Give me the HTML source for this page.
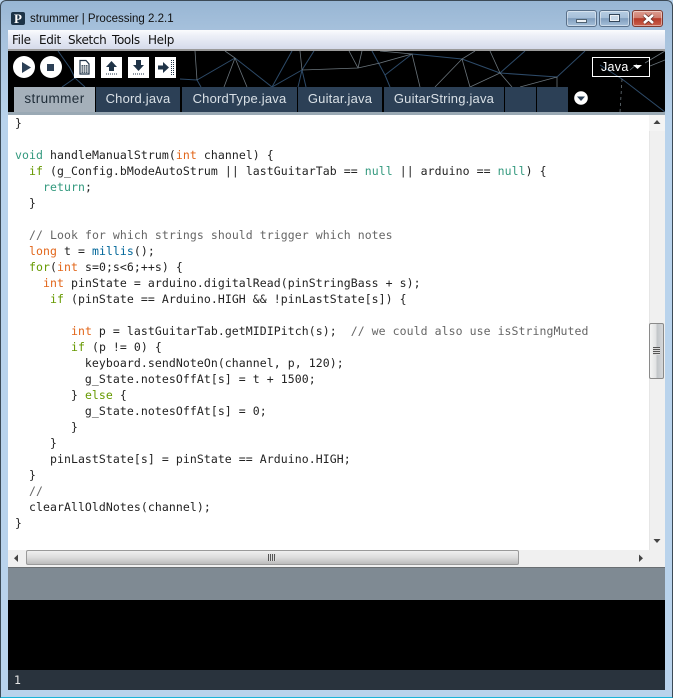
<!DOCTYPE html>
<html><head><meta charset="utf-8"><style>
html,body{margin:0;padding:0;width:673px;height:698px;overflow:hidden;background:#b9d3ec}
*{box-sizing:border-box}
.a{position:absolute}
#frame{position:absolute;left:0;top:0;width:673px;height:698px;background:linear-gradient(to bottom,#98b6d4 0,#a6c1dc 30px,#b9d3ec 120px,#b9d3ec 100%);border:1px solid #3c4a56;border-bottom:1px solid #1ab3d8;border-radius:6px 6px 0 0}
.m{position:absolute;top:32px;font:12px/16px "DejaVu Sans",sans-serif;color:#111;letter-spacing:-.35px}
.tab{position:absolute;top:87px;height:25px;background:#2c4056;color:#d9e0e6;font:13px/24px "Liberation Sans",sans-serif;text-align:center;letter-spacing:.2px}
#code{position:absolute;left:15px;top:115px;margin:0;font:11.5px/16px "DejaVu Sans Mono",monospace;letter-spacing:.07px;color:#222;white-space:pre}
#code .c{color:#666}#code .o{color:#e2661a}#code .t{color:#33997e}#code .g{color:#669900}#code .b{color:#006699}
.btn{position:absolute;top:57px;width:21px;height:21px;background:#fff}
.wb{position:absolute;top:10px;height:17px;border:1px solid #59708a;border-radius:3px;background:linear-gradient(to bottom,#b6cde3 0,#a6bfd9 45%,#7f9dbd 50%,#a6c0da 100%);box-shadow:inset 0 0 0 1px rgba(255,255,255,.45)}
</style></head><body>
<div id="frame"></div>

<div class="a" style="left:11px;top:12px;width:14px;height:13px;background:#1c3347;border-radius:2px;color:#fff;font:bold 13px/13px 'Liberation Serif',serif;text-align:center">P</div>
<div class="a" style="left:30px;top:11px;font:11.5px/16px 'Liberation Sans',sans-serif;color:#111">strummer | Processing 2.2.1</div>

<div class="wb" style="left:566px;width:31px"><div class="a" style="left:9px;top:8px;width:11px;height:4px;background:#eef2f6;border:1px solid #4f6272"></div></div>
<div class="wb" style="left:599px;width:31px"><div class="a" style="left:9px;top:3px;width:11px;height:8px;border:1px solid #33465a;background:#c8d8e8;box-shadow:inset 0 0 0 1px #eef2f6"></div></div>
<div class="wb" style="left:632px;width:31px;border-color:#7e3a30;background:linear-gradient(to bottom,#dd9d90 0,#cf7e70 45%,#b53a28 50%,#c9604c 100%)"><svg class="a" style="left:9px;top:2px" width="13" height="12" viewBox="0 0 13 12"><path d="M2 2L11 10M11 2L2 10" stroke="#5c2b25" stroke-width="4"/><path d="M2 2L11 10M11 2L2 10" stroke="#fff" stroke-width="2.6"/></svg></div>

<div class="a" style="left:8px;top:30px;width:657px;height:20px;background:linear-gradient(to bottom,#fbfcfe 0,#eef1f8 25%,#d3d9ea 100%)"></div>
<div class="a" style="left:8px;top:49px;width:657px;height:2px;background:#9a9a9a"></div>
<div class="m" style="left:12px">File</div><div class="m" style="left:39px">Edit</div><div class="m" style="left:68px">Sketch</div><div class="m" style="left:112px">Tools</div><div class="m" style="left:148px">Help</div>

<div class="a" style="left:8px;top:51px;width:657px;height:61px;background:#000"></div>
<svg class="a" style="left:8px;top:51px" width="657" height="61" viewBox="8 51 657 61" fill="none" stroke-width="1">
<g stroke="#2d4a68">
<path d="M58 51L70 68L75 78L62 87M75 78L85 87M235 58L197 80L180 79M197 80L201 87M235 58L272 87L302 70M272 87L292 51M302 70L314 51M302 70L298 87M302 70L306 87M412 54L385 75M385 75L390 87M385 75L372 51M412 54L462 59M500 73L525 51M500 73L557 77L585 51M622 79L665 112M622 79L600 65M462 59L500 73"/>
</g>
<g stroke="#7c8890" stroke-width=".8" opacity=".85">
<path d="M195 51L197 80M235 58L224 87M235 58L247 87M225 51L235 58M302 70L300 51M302 70L358 68L349 51M358 68L362 51M358 68L380 63L412 54L420 87M412 54L380 51M462 59L435 87M462 59L475 51M462 59L470 87M500 73L490 51M500 73L470 87M500 73L512 87M557 77L520 87M557 77L557 87M645 63L665 51M650 66L665 60M630 70L637 64"/>
<path d="M622 79L620 112" stroke-dasharray="3 3"/>
</g>
</svg>

<svg class="a" style="left:13px;top:56px" width="50" height="23" viewBox="0 0 50 23"><circle cx="11" cy="11" r="11" fill="#fff"/><path d="M9 6L18 11.5L9 17Z" fill="#2c4056"/><circle cx="38" cy="11" r="11" fill="#fff"/><rect x="34" y="8" width="7" height="7" fill="#2c4056"/></svg>

<div class="btn" style="left:74px"><svg width="21" height="21" viewBox="0 0 21 21"><path d="M6 3.5H12L15 7V17H6Z" fill="#fff" stroke="#1f3347" stroke-width="1.2"/><path d="M7.5 8h6v8h-6z" fill="#4a5a68"/><path d="M7.5 10h6M7.5 12h6M7.5 14h6M9.5 8v8M11.5 8v8" stroke="#fff" stroke-width=".6"/></svg></div>
<div class="btn" style="left:101px"><svg width="21" height="21" viewBox="0 0 21 21"><path d="M10.5 4L16 10H13V14H8V10H5Z" fill="#1f3347"/><path d="M5 17H16" stroke="#1f3347" stroke-width="1" stroke-dasharray="1 1"/></svg></div>
<div class="btn" style="left:128px"><svg width="21" height="21" viewBox="0 0 21 21"><path d="M8 3H13V8H16L10.5 14L5 8H8Z" fill="#1f3347"/><path d="M5 17H16" stroke="#1f3347" stroke-width="1" stroke-dasharray="1 1"/></svg></div>
<div class="btn" style="left:155px"><svg width="21" height="21" viewBox="0 0 21 21"><path d="M3 8.5H8V5L14 10.5L8 16V12.5H3Z" fill="#1f3347"/><path d="M16.5 3V18M18.5 3V18" stroke="#1f3347" stroke-width="1" stroke-dasharray="1 1"/></svg></div>

<div class="a" style="left:592px;top:57px;width:58px;height:20px;border:1px solid #fff;color:#fff;font:12.5px/18px 'Liberation Sans',sans-serif;padding-left:8px;letter-spacing:.3px">Java</div>
<svg class="a" style="left:632px;top:64px" width="11" height="6"><path d="M1 1H10L5.5 5Z" fill="#fff"/></svg>

<div class="tab" style="left:14px;width:81px;background:#a5b0ba;color:#1f2c38;font-size:13.5px;letter-spacing:.4px">strummer</div>
<div class="tab" style="left:96px;width:84px">Chord.java</div>
<div class="tab" style="left:182px;width:115px">ChordType.java</div>
<div class="tab" style="left:298px;width:84px">Guitar.java</div>
<div class="tab" style="left:384px;width:120px">GuitarString.java</div>
<div class="tab" style="left:505px;width:31px"></div>
<div class="tab" style="left:537px;width:31px"></div>
<svg class="a" style="left:574px;top:91px" width="14" height="14"><circle cx="7" cy="7" r="6.8" fill="#fff"/><path d="M3 5.5H11L7 10Z" fill="#2c4056"/></svg>

<div class="a" style="left:8px;top:112px;width:657px;height:3px;background:#9aa9b4"></div>

<div class="a" style="left:8px;top:115px;width:641px;height:435px;background:#fff"></div>
<pre id="code">}

<span class="t">void</span> handleManualStrum(<span class="o">int</span> channel) {
  <span class="g">if</span> (g_Config.bModeAutoStrum || lastGuitarTab == <span class="t">null</span> || arduino == <span class="t">null</span>) {
    <span class="t">return</span>;
  }

  <span class="c">// Look for which strings should trigger which notes</span>
  <span class="o">long</span> t = <span class="b">millis</span>();
  <span class="g">for</span>(<span class="o">int</span> s=0;s&lt;6;++s) {
    <span class="o">int</span> pinState = arduino.digitalRead(pinStringBass + s);
     <span class="g">if</span> (pinState == Arduino.HIGH &amp;&amp; !pinLastState[s]) {

        <span class="o">int</span> p = lastGuitarTab.getMIDIPitch(s);  <span class="c">// we could also use isStringMuted</span>
        <span class="g">if</span> (p != 0) {
          keyboard.sendNoteOn(channel, p, 120);
          g_State.notesOffAt[s] = t + 1500;
        } <span class="g">else</span> {
          g_State.notesOffAt[s] = 0;
        }
     }
     pinLastState[s] = pinState == Arduino.HIGH;
  }
  <span class="c">//</span>
  clearAllOldNotes(channel);
}</pre>

<div class="a" style="left:649px;top:115px;width:16px;height:435px;background:#f0f0f0;border-left:1px solid #e6e6e6"></div>
<div class="a" style="left:649px;top:115px;width:16px;height:16px;background:#f4f4f4"></div>
<svg class="a" style="left:653px;top:119px" width="9" height="6"><path d="M0.5 5H7.5L4 1Z" fill="#444"/></svg>
<svg class="a" style="left:653px;top:538px" width="9" height="6"><path d="M0.5 1H7.5L4 5Z" fill="#444"/></svg>
<div class="a" style="left:649px;top:323px;width:15px;height:56px;border:1px solid #8a8a8a;border-radius:2px;background:linear-gradient(to right,#f4f4f4 0,#e2e3e4 45%,#c2c6c9 55%,#d6d8da 100%)"></div>
<div class="a" style="left:653px;top:347px;width:7px;height:8px;background:repeating-linear-gradient(to bottom,#555 0,#555 1px,#ddd 1px,#ddd 2px)"></div>

<div class="a" style="left:8px;top:550px;width:657px;height:17px;background:#f0f0f0"></div>
<svg class="a" style="left:13px;top:554px" width="6" height="9"><path d="M5 0.5V8L1 4.2Z" fill="#444"/></svg>
<svg class="a" style="left:638px;top:554px" width="6" height="9"><path d="M1 0.5V8L5 4.2Z" fill="#444"/></svg>
<div class="a" style="left:26px;top:550px;width:493px;height:15px;border:1px solid #9a9a9a;border-radius:2px;background:linear-gradient(to bottom,#efefef 0,#dcdcdc 50%,#bcbcbc 100%)"></div>
<div class="a" style="left:268px;top:554px;width:8px;height:7px;background:repeating-linear-gradient(to right,#555 0,#555 1px,#ddd 1px,#ddd 2px)"></div>

<div class="a" style="left:8px;top:567px;width:657px;height:33px;background:#7f8a93;border-top:1px solid #6a6f73"></div>
<div class="a" style="left:8px;top:600px;width:657px;height:70px;background:#000"></div>
<div class="a" style="left:8px;top:670px;width:657px;height:20px;background:#29333d;color:#e6e6e6;font:11.5px/21px 'DejaVu Sans Mono',monospace;padding-left:6px">1</div>
</body></html>
